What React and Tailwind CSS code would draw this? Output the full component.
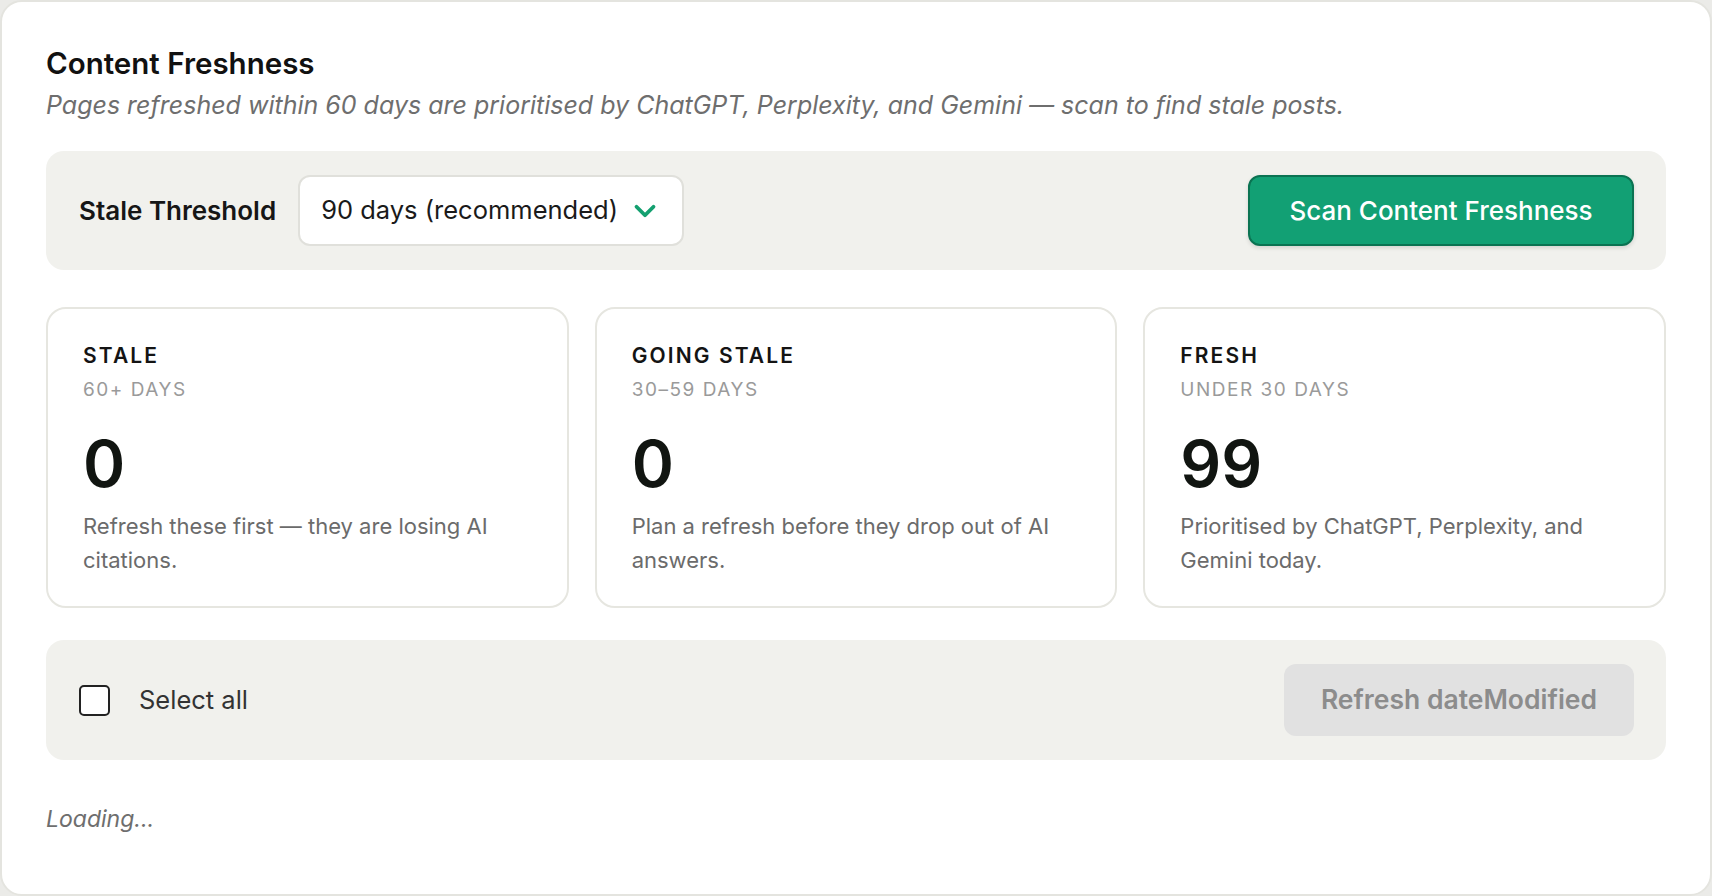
import { ChevronDown } from "lucide-react";

const stats = [
  {
    label: "STALE",
    range: "60+ DAYS",
    count: 0,
    note: "Refresh these first — they are losing AI citations.",
  },
  {
    label: "GOING STALE",
    range: "30–59 DAYS",
    count: 0,
    note: "Plan a refresh before they drop out of AI answers.",
  },
  {
    label: "FRESH",
    range: "UNDER 30 DAYS",
    count: 99,
    note: "Prioritised by ChatGPT, Perplexity, and Gemini today.",
  },
];

function StatCard({ label, range, count, note }) {
  return (
    <div className="rounded-[20px] border-2 border-[#e6e6e0] bg-white px-[35px] pt-[33px] pb-[29px]">
      <div className="text-[21px] leading-[28px] font-semibold tracking-[0.1em] text-[#141414]">
        {label}
      </div>
      <div className="mt-[8px] text-[19px] leading-[24px] tracking-[0.08em] text-[#9a9a9a]">
        {range}
      </div>
      <div className="mt-[25px] text-[64px] leading-[74px] font-semibold text-[#111511]">
        {count}
      </div>
      <p className="mt-[8px] text-[22px] leading-[34px] text-[#6b6b6b]">{note}</p>
    </div>
  );
}

export default function App() {
  return (
    <div
      className="h-[896px] w-full bg-[#ebebe8]"
      style={{ fontFamily: "Inter, 'Noto Sans', sans-serif" }}
    >
      <div className="flex h-full flex-col rounded-[22px] border-2 border-[#e4e4df] bg-white px-[44px] pt-[43px]">
        <h1 className="text-[29.5px] leading-[36px] font-semibold text-[#111]">
          Content Freshness
        </h1>
        <p className="mt-[9px] text-[25px] leading-[30px] italic text-[#6e6e6e]">
          Pages refreshed within 60 days are prioritised by ChatGPT, Perplexity, and Gemini — scan
          to find stale posts.
        </p>

        <div className="mt-[31px] flex items-center justify-between rounded-[18px] bg-[#f1f1ed] py-[24px] pr-[32px] pl-[33px]">
          <div className="flex items-center gap-[22px]">
            <span className="text-[26px] font-semibold text-[#161616]">Stale Threshold</span>
            <button className="flex h-[71px] w-[386px] items-center justify-between rounded-[12px] border-2 border-[#e0e0db] bg-white pr-[20px] pl-[21px] text-[25.5px] text-[#1a1a1a]">
              <span>90 days (recommended)</span>
              <ChevronDown className="h-[34px] w-[34px] text-[#14a070]" strokeWidth={2.7} />
            </button>
          </div>
          <button className="h-[71px] w-[386px] rounded-[12px] border-2 border-[#0b7352] bg-[#12a074] text-[26px] font-medium text-white shadow-[0_2px_4px_rgba(0,0,0,0.12)]">
            Scan Content Freshness
          </button>
        </div>

        <div className="mt-[37px] grid grid-cols-3 gap-[26px]">
          {stats.map((s) => (
            <StatCard key={s.label} {...s} />
          ))}
        </div>

        <div className="mt-[32px] flex h-[120px] items-center justify-between rounded-[18px] bg-[#f1f1ed] pr-[32px] pl-[33px]">
          <label className="flex items-center gap-[29px]">
            <span className="block h-[31px] w-[31px] rounded-[5px] border-2 border-[#222] bg-white" />
            <span className="text-[25.5px] text-[#333]">Select all</span>
          </label>
          <button
            disabled
            className="h-[72px] w-[350px] rounded-[12px] bg-[#e1e1e1] text-[26.5px] font-semibold text-[#8c8c8c]"
          >
            Refresh dateModified
          </button>
        </div>

        <div className="mt-[44px] text-[23px] leading-[30px] italic text-[#6e6e6e]">Loading...</div>
      </div>
    </div>
  );
}
